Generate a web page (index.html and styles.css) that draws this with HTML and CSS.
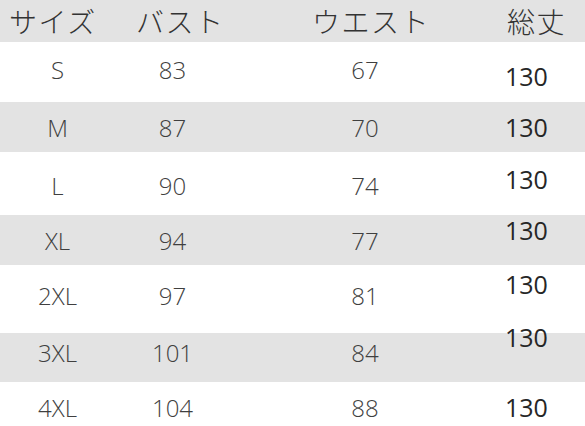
FILE: index.html
```html
<!DOCTYPE html>
<html lang="ja">
<head>
<meta charset="utf-8">
<title>サイズ表</title>
<link rel="stylesheet" href="styles.css">
</head>
<body>
<div class="chart">
  <div class="head">
    <div class="h h1">サイズ</div>
    <div class="h h2">バスト</div>
    <div class="h h3">ウエスト</div>
    <div class="h h4">総丈</div>
  </div>
  <div class="row white r-s">
    <div class="c">S</div><div class="c">83</div><div class="c">67</div><div class="len">130</div>
  </div>
  <div class="row grey r-m">
    <div class="c">M</div><div class="c">87</div><div class="c">70</div><div class="len">130</div>
  </div>
  <div class="row white r-l">
    <div class="c">L</div><div class="c">90</div><div class="c">74</div><div class="len">130</div>
  </div>
  <div class="row grey r-xl">
    <div class="c">XL</div><div class="c">94</div><div class="c">77</div><div class="len">130</div>
  </div>
  <div class="row white r-2xl">
    <div class="c">2XL</div><div class="c">97</div><div class="c">81</div><div class="len">130</div>
  </div>
  <div class="row grey r-3xl">
    <div class="c">3XL</div><div class="c">101</div><div class="c">84</div><div class="len">130</div>
  </div>
  <div class="row white r-4xl">
    <div class="c">4XL</div><div class="c">104</div><div class="c">88</div><div class="len">130</div>
  </div>
</div>
</body>
</html>
```
FILE: styles.css
```css
html, body {
  margin: 0;
  padding: 0;
  background: #ffffff;
}
.chart {
  width: 585px;
  height: 426px;
  overflow: hidden;
  display: flex;
  flex-direction: column;
}
.head {
  height: 42px;
  background: #e3e3e3;
  display: grid;
  grid-template-columns: 115px 115px 270px 85px;
  align-items: center;
}
.h {
  font-family: "Noto Sans CJK JP", sans-serif;
  font-weight: 300;
  font-size: 28px;
  line-height: 1;
  letter-spacing: 1.5px;
  color: #333333;
  white-space: nowrap;
}
.h1 { padding-left: 9px; }
.h2 { padding-left: 21px; }
.h3 { padding-left: 82px; }
.h4 { padding-left: 7px; }

.row {
  display: grid;
  grid-template-columns: 115px 115px 270px 85px;
  align-items: start;
  box-sizing: border-box;
}
.white { background: #ffffff; }
.grey { background: #e3e3e3; }

.c {
  font-family: "Open Sans", sans-serif;
  font-weight: 300;
  font-size: 24px;
  line-height: 24px;
  color: #3f3f3f;
  text-align: center;
}
.len {
  font-family: "Open Sans", sans-serif;
  font-size: 25px;
  line-height: 25px;
  color: #262626;
  padding-left: 5px;
}

.r-s   { height: 60px; padding-top: 16px; }
.r-s .len { margin-top: 6px; }
.r-m   { height: 50px; padding-top: 14px; }
.r-m .len { margin-top: -1px; }
.r-l   { height: 63px; padding-top: 22px; }
.r-l .len { margin-top: -7px; }
.r-xl  { height: 50px; padding-top: 14px; }
.r-xl .len { margin-top: -11px; }
.r-2xl { height: 68px; padding-top: 19px; }
.r-2xl .len { margin-top: -12px; }
.r-3xl { height: 49px; padding-top: 8px; }
.r-3xl .len { margin-top: -16px; }
.r-4xl { height: 44px; padding-top: 14px; }
.r-4xl .len { margin-top: -1px; }
```
